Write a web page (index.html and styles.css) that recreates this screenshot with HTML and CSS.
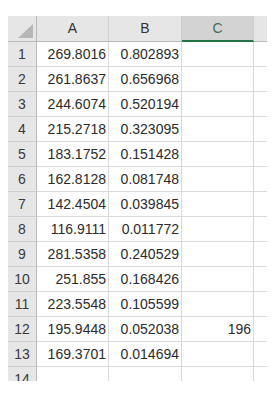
FILE: index.html
```html
<!DOCTYPE html>
<html lang="en">
<head>
  <meta charset="UTF-8">
  <meta name="viewport" content="width=device-width, initial-scale=1.0">
  <title>Sheet1</title>
  <link rel="stylesheet" href="styles.css">
</head>
<body>
  <div class="sheet">
    <div class="corner"><span class="corner-mark"></span></div>
    <div class="col-head">A</div>
    <div class="col-head">B</div>
    <div class="col-head selected">C</div>
    <div class="col-head edge"></div>

    <div class="row-head">1</div><div class="cell">269.8016</div><div class="cell">0.802893</div><div class="cell"></div><div class="cell edge"></div>
    <div class="row-head">2</div><div class="cell">261.8637</div><div class="cell">0.656968</div><div class="cell"></div><div class="cell edge"></div>
    <div class="row-head">3</div><div class="cell">244.6074</div><div class="cell">0.520194</div><div class="cell"></div><div class="cell edge"></div>
    <div class="row-head">4</div><div class="cell">215.2718</div><div class="cell">0.323095</div><div class="cell"></div><div class="cell edge"></div>
    <div class="row-head">5</div><div class="cell">183.1752</div><div class="cell">0.151428</div><div class="cell"></div><div class="cell edge"></div>
    <div class="row-head">6</div><div class="cell">162.8128</div><div class="cell">0.081748</div><div class="cell"></div><div class="cell edge"></div>
    <div class="row-head">7</div><div class="cell">142.4504</div><div class="cell">0.039845</div><div class="cell"></div><div class="cell edge"></div>
    <div class="row-head">8</div><div class="cell">116.9111</div><div class="cell">0.011772</div><div class="cell"></div><div class="cell edge"></div>
    <div class="row-head">9</div><div class="cell">281.5358</div><div class="cell">0.240529</div><div class="cell"></div><div class="cell edge"></div>
    <div class="row-head">10</div><div class="cell">251.855</div><div class="cell">0.168426</div><div class="cell"></div><div class="cell edge"></div>
    <div class="row-head">11</div><div class="cell">223.5548</div><div class="cell">0.105599</div><div class="cell"></div><div class="cell edge"></div>
    <div class="row-head">12</div><div class="cell">195.9448</div><div class="cell">0.052038</div><div class="cell">196</div><div class="cell edge"></div>
    <div class="row-head">13</div><div class="cell">169.3701</div><div class="cell">0.014694</div><div class="cell"></div><div class="cell edge"></div>
    <div class="row-head">14</div><div class="cell"></div><div class="cell"></div><div class="cell"></div><div class="cell edge"></div>
  </div>
</body>
</html>
```

FILE: styles.css
```css
body {
  margin: 0;
  background-color: #fff;
  font-family: "Liberation Sans", Arial, sans-serif;
}

.sheet {
  display: grid;
  grid-template-columns: 29px 72px 73px 72px 13px;
  grid-template-rows: 26px;
  grid-auto-rows: 25px;
  margin: 16px 0 0 8px;
  width: 259px;
  height: 365px;
  overflow: hidden;
  font-size: 14px;
  color: #2b2b2b;
}

.sheet > div {
  box-sizing: border-box;
  line-height: 24px;
  white-space: nowrap;
}

.corner {
  position: relative;
  background-color: #e6e6e6;
  border-right: 1px solid #b9b9b9;
  border-bottom: 1px solid #b9b9b9;
}

.corner-mark {
  position: absolute;
  right: 3px;
  bottom: 3px;
  width: 0;
  height: 0;
  border-left: 15px solid transparent;
  border-bottom: 14px solid #b7b7b7;
}

.col-head {
  background-color: #e6e6e6;
  border-right: 1px solid #cfcfcf;
  border-bottom: 1px solid #b9b9b9;
  text-align: center;
  color: #333;
  line-height: 25px;
}

.col-head.selected {
  background-color: #d3d3d3;
  border-bottom: 2px solid #217346;
  color: #3f6f56;
}

.row-head {
  background-color: #e6e6e6;
  border-right: 1px solid #b9b9b9;
  border-bottom: 1px solid #cfcfcf;
  text-align: center;
  color: #3a3a3a;
}

.cell {
  border-right: 1px solid #dadada;
  border-bottom: 1px solid #dadada;
  text-align: right;
  padding-right: 2px;
}

.edge {
  border-right: none;
}
```
